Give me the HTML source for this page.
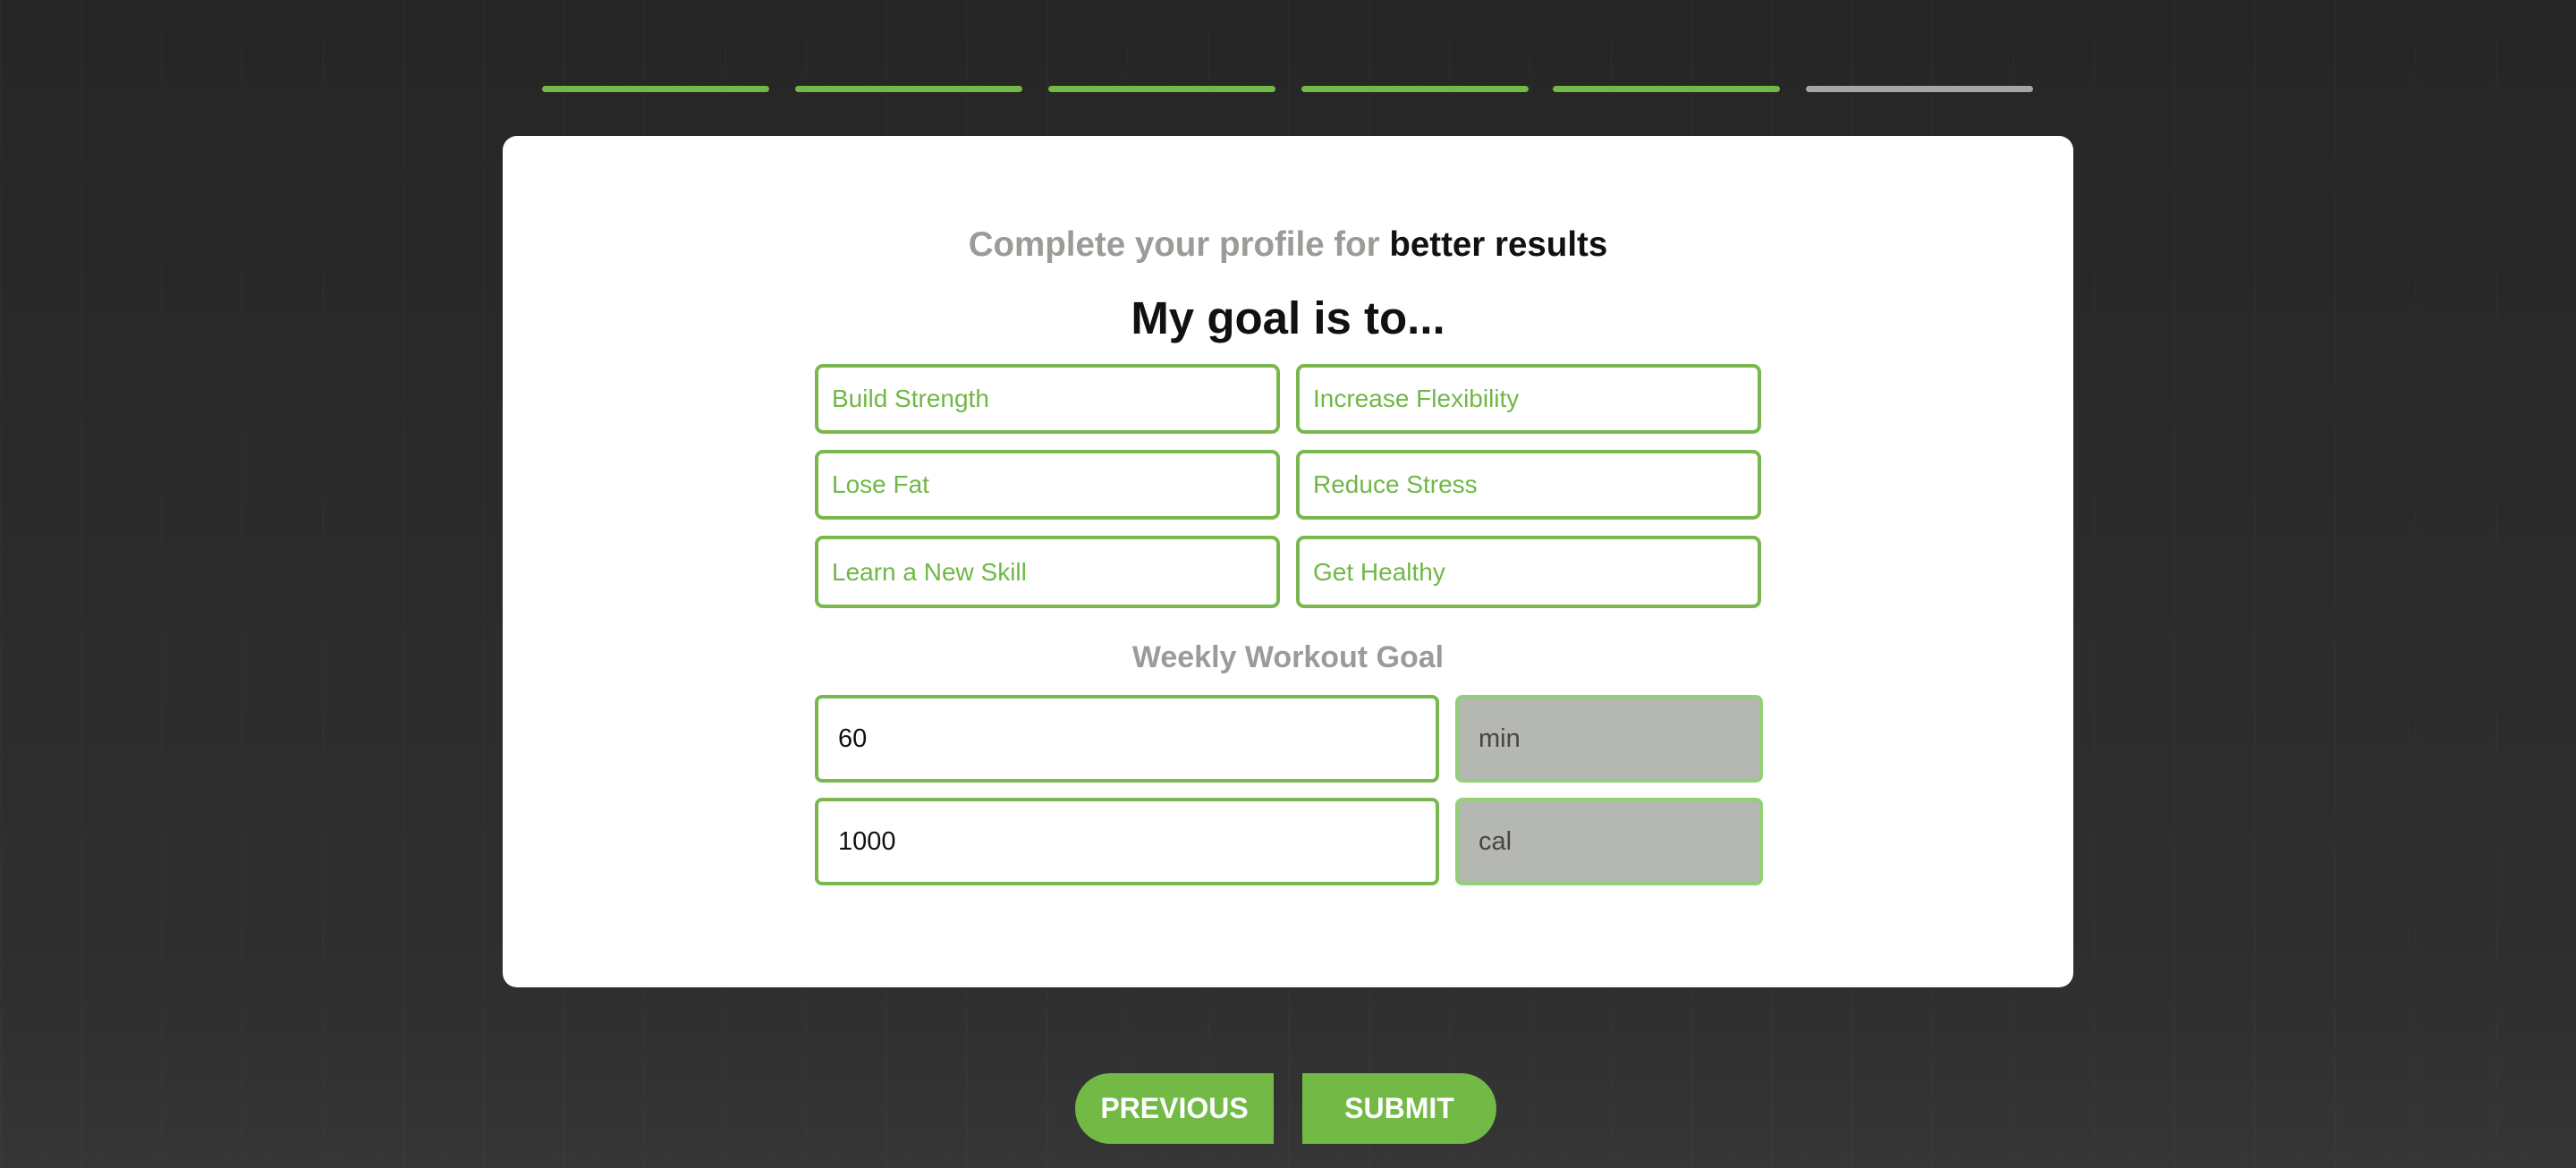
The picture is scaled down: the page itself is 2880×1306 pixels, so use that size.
<!DOCTYPE html>
<html><head><meta charset="utf-8"><style>
*{box-sizing:border-box;margin:0;padding:0}
html,body{width:2880px;height:1306px;overflow:hidden}
body{position:relative;font-family:"Liberation Sans",sans-serif;
background:linear-gradient(180deg,#262626 0%,#2a2a2a 40%,#2f2f2f 85%,#363636 100%);}
.bg1{position:absolute;left:0;top:0;width:2880px;height:1306px;
background:repeating-linear-gradient(90deg,rgba(255,255,255,0.015) 0 2px,transparent 2px 90px);}
.bar{position:absolute;top:96px;height:7px;width:254px;border-radius:4px;background:#72b945}
.card{position:absolute;left:562px;top:152px;width:1756px;height:952px;background:#fff;border-radius:16px}
.abs{position:absolute}
.sub{left:0;width:2880px;top:252px;text-align:center;font-weight:bold;font-size:38.5px;color:#999c97}
.sub b{color:#111}
.h{left:0;width:2880px;top:326px;text-align:center;font-weight:bold;font-size:51px;color:#111}
.g{position:absolute;width:520px;height:78px;border:4px solid #7ab84f;border-radius:9px;color:#6fb845;font-size:28px;line-height:70px;padding-left:15px}
.w{left:0;width:2880px;top:716px;text-align:center;font-weight:bold;font-size:34px;color:#999c97}
.in{position:absolute;left:911px;width:698px;height:98px;border:4px solid #7ab84f;border-radius:8px;font-size:29px;line-height:90px;padding-left:22px;color:#111}
.un{position:absolute;left:1627px;width:344px;height:98px;border:4px solid #93cf78;border-radius:8px;background:#b5b7b2;font-size:29px;line-height:90px;padding-left:22px;color:#444}
.btn{position:absolute;top:1200px;height:79px;background:#72b945;color:#fff;font-weight:bold;font-size:32px;text-align:center;line-height:79px}
</style></head><body>
<div class="bg1"></div>
<div class="bar" style="left:606px"></div>
<div class="bar" style="left:889px"></div>
<div class="bar" style="left:1172px"></div>
<div class="bar" style="left:1455px"></div>
<div class="bar" style="left:1736px"></div>
<div class="bar" style="left:2019px;background:#a6a6a6"></div>
<div class="card"></div>
<div class="abs sub">Complete your profile for <b>better results</b></div>
<div class="abs h">My goal is to...</div>
<div class="g" style="left:911px;top:407px">Build Strength</div>
<div class="g" style="left:1449px;top:407px">Increase Flexibility</div>
<div class="g" style="left:911px;top:503px">Lose Fat</div>
<div class="g" style="left:1449px;top:503px">Reduce Stress</div>
<div class="g" style="left:911px;top:599px;height:81px;line-height:73px">Learn a New Skill</div>
<div class="g" style="left:1449px;top:599px;height:81px;line-height:73px">Get Healthy</div>
<div class="abs w">Weekly Workout Goal</div>
<div class="in" style="top:777px">60</div>
<div class="un" style="top:777px">min</div>
<div class="in" style="top:892px">1000</div>
<div class="un" style="top:892px">cal</div>
<div class="btn" style="left:1202px;width:222px;border-radius:40px 0 0 40px">PREVIOUS</div>
<div class="btn" style="left:1456px;width:217px;border-radius:0 40px 40px 0">SUBMIT</div>
</body></html>
